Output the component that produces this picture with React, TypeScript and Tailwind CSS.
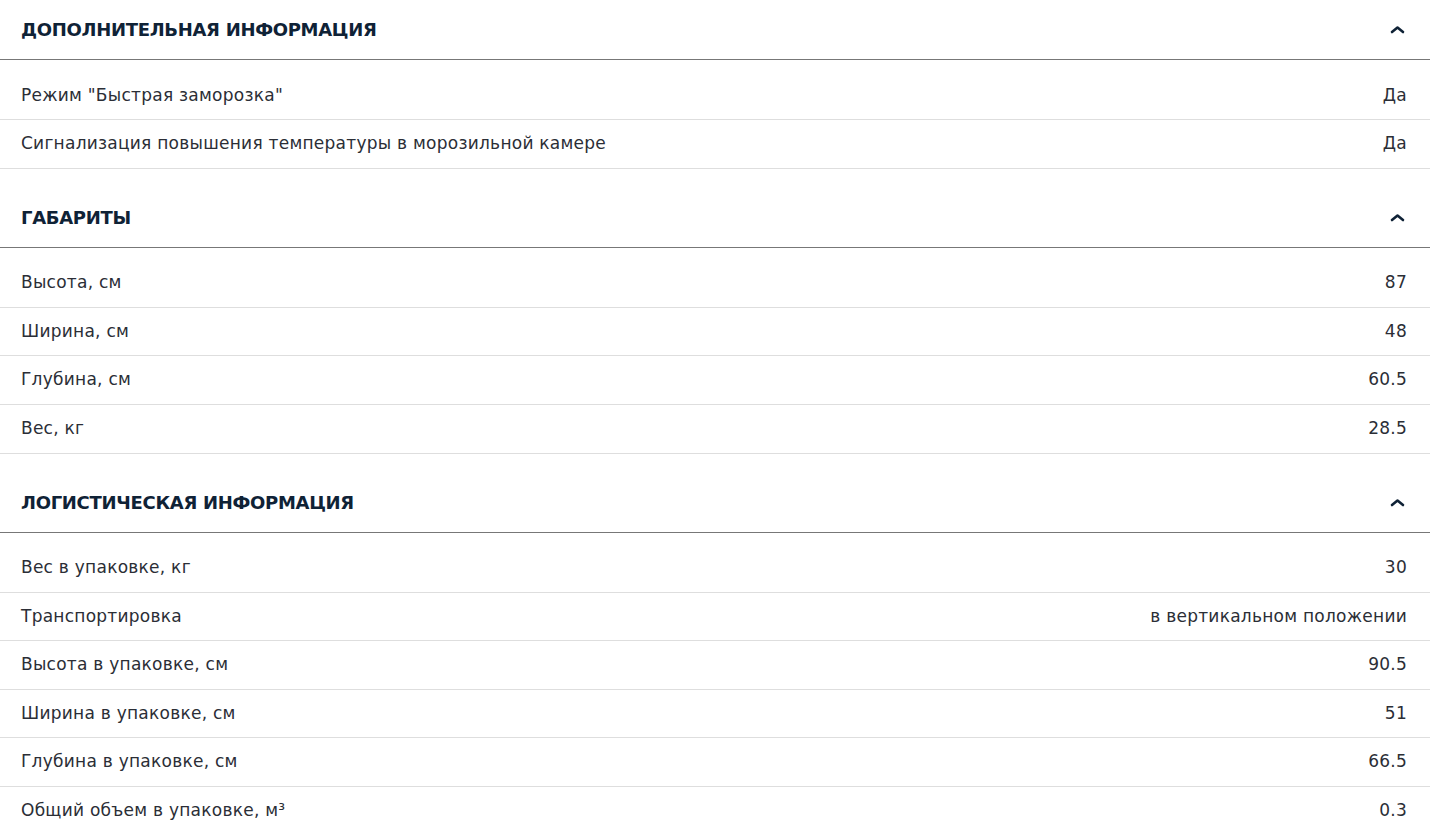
import React from "react";

type Row = [string, string];
const sections: { title: string; rows: Row[] }[] = [
  {
    title: "Дополнительная информация",
    rows: [
      ['Режим "Быстрая заморозка"', "Да"],
      ["Сигнализация повышения температуры в морозильной камере", "Да"],
    ],
  },
  {
    title: "Габариты",
    rows: [
      ["Высота, см", "87"],
      ["Ширина, см", "48"],
      ["Глубина, см", "60.5"],
      ["Вес, кг", "28.5"],
    ],
  },
  {
    title: "Логистическая информация",
    rows: [
      ["Вес в упаковке, кг", "30"],
      ["Транспортировка", "в вертикальном положении"],
      ["Высота в упаковке, см", "90.5"],
      ["Ширина в упаковке, см", "51"],
      ["Глубина в упаковке, см", "66.5"],
      ["Общий объем в упаковке, м³", "0.3"],
    ],
  },
];

function Chevron() {
  return (
    <svg width="15" height="9" viewBox="0 0 15 9" fill="none">
      <path d="M2 7 L7.5 2.5 L13 7" stroke="#0f2236" strokeWidth="2.6" strokeLinecap="round" strokeLinejoin="round" />
    </svg>
  );
}

export default function App() {
  return (
    <div className="w-[1430px] bg-white text-[#2b2e36]" style={{ fontFamily: '"DejaVu Sans", sans-serif' }}>
      {sections.map((s, i) => (
        <section key={s.title} className={i === 0 ? "" : "mt-[19px]"}>
          <div className="flex h-[60px] items-center justify-between border-b border-[#777777] pl-[21px] pr-[25px]">
            <h2 className="text-[18px] font-bold uppercase tracking-[-0.3px] text-[#0f2236]">{s.title}</h2>
            <Chevron />
          </div>
          <div className="pt-[11.5px]">
            {s.rows.map(([k, v]) => (
              <div key={k} className="flex h-[48.6px] items-center justify-between border-b border-[#dedede] pl-[21px] pr-[23px] text-[17px] tracking-[0.25px]">
                <span>{k}</span>
                <span>{v}</span>
              </div>
            ))}
          </div>
        </section>
      ))}
    </div>
  );
}
